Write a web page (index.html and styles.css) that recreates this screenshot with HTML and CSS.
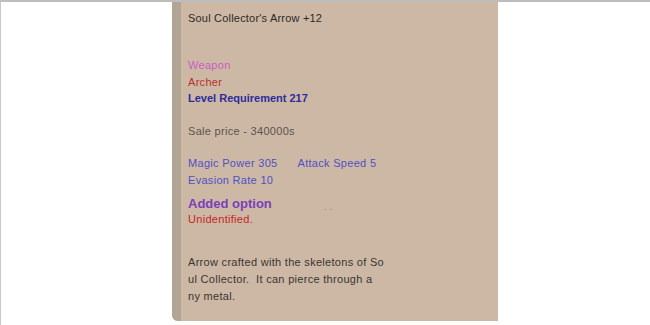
FILE: index.html
```html
<!DOCTYPE html>
<html>
<head>
<meta charset="utf-8">
<link rel="stylesheet" href="styles.css">
</head>
<body>
<div class="frame">
  <div class="tooltip">
    <div class="strip"></div>
    <div class="content">
      <div class="title">Soul Collector's Arrow +12</div>
      <div class="type">Weapon</div>
      <div class="cls">Archer</div>
      <div class="req">Level Requirement 217</div>
      <div class="price">Sale price - 340000s</div>
      <div class="stats">
        <span class="stat">Magic Power 305</span><span class="stat">Attack Speed 5</span>
      </div>
      <div class="stat">Evasion Rate 10</div>
      <div class="added"><span>Added option</span><span class="dots">· ·</span></div>
      <div class="unid">Unidentified.</div>
      <div class="desc">Arrow crafted with the skeletons of So<br>ul Collector.&nbsp; It can pierce through a<br>ny metal.</div>
    </div>
  </div>
</div>
</body>
</html>
```
FILE: styles.css
```css
html, body {
  margin: 0;
  padding: 0;
  background: #ffffff;
}
.frame {
  width: 650px;
  height: 325px;
  box-sizing: border-box;
  border-top: 2px solid #bdbdbd;
  border-left: 1px solid #c8c8c8;
  overflow: hidden;
}
.tooltip {
  margin-left: 171px;
  width: 326px;
  height: 319px;
  display: flex;
  background: #cdb8a6;
  border-bottom-left-radius: 6px;
  overflow: hidden;
}
.strip {
  width: 9px;
  background: #b3a594;
  flex: none;
}
.content {
  padding: 8px 0 0 7px;
  font-family: "Liberation Sans", Arial, sans-serif;
  font-size: 11px;
  line-height: 17px;
  letter-spacing: 0.3px;
  color: #3a3530;
}
.title { color: #2e2a26; margin-bottom: 30px; letter-spacing: 0.2px; }
.type { color: #cc5cc4; }
.cls { color: #b8302a; line-height: 16px; }
.req { color: #2c2c9c; font-weight: 600; letter-spacing: 0; }
.price { color: #5a544e; margin-top: 16px; margin-bottom: 15px; }
.stats { display: flex; gap: 20px; }
.stat { color: #5050c4; }
.added {
  color: #7a3fb8;
  font-weight: bold;
  font-size: 13px;
  margin-top: 6px;
  height: 17px;
  line-height: 17px;
  letter-spacing: 0;
  display: flex;
  align-items: flex-end;
}
.dots { color: #8d8680; font-size: 9px; line-height: 9px; font-weight: normal; margin-left: 52px; margin-bottom: -2px; }
.unid { color: #c42424; line-height: 14px; }
.desc { color: #3a3530; margin-top: 28px; }
```
